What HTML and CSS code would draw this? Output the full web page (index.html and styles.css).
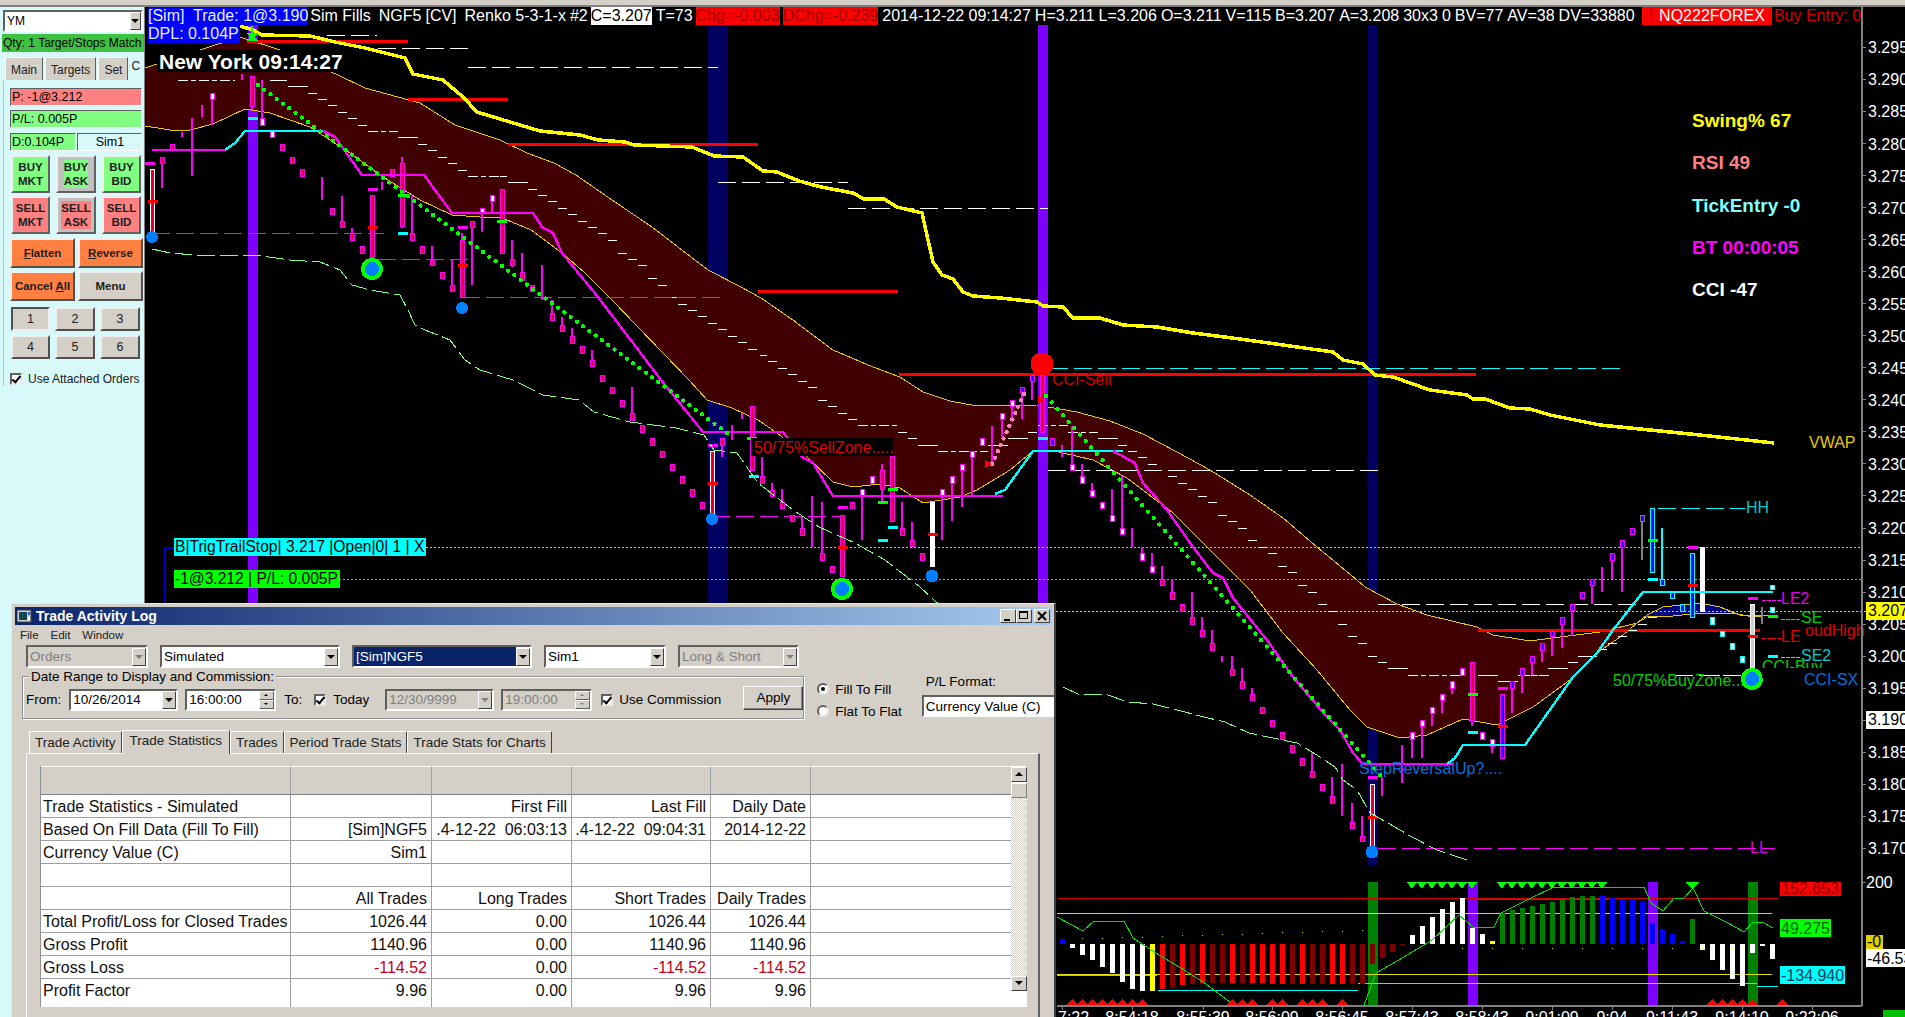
FILE: index.html
```html
<!DOCTYPE html>
<html lang="en">
<head>
  <meta charset="UTF-8">
  <title>Renko Chart with Trade Activity Log</title>
  <link rel="stylesheet" href="styles.css">
</head>
<body>
<div class="top-strip"></div>
<div class="workspace">

  <!-- Order entry panel -->
  <aside class="order-panel">
    <div class="combo symbol"><span class="combo-text">YM</span><i class="drop-btn"></i></div>
    <div class="qty-bar">Qty: 1 Target/Stops Match</div>
    <div class="panel-tabs">
      <span class="panel-tab">Main</span>
      <span class="panel-tab">Targets</span>
      <span class="panel-tab">Set</span>
      <span class="panel-tab last">C</span>
    </div>
    <div class="panel-body">
      <div class="field red-field">P: -1@3.212</div>
      <div class="field green-field">P/L: 0.005P</div>
      <div class="field-pair">
        <div class="field green-field">D:0.104P</div>
        <div class="field sim-field">Sim1</div>
      </div>
      <div class="trade-grid">
        <button class="btn-trade buy">BUY<br>MKT</button>
        <button class="btn-trade grey"><span class="buy-mark">BUY<br>ASK</span></button>
        <button class="btn-trade buy">BUY<br>BID</button>
        <button class="btn-trade sell">SELL<br>MKT</button>
        <button class="btn-trade grey"><span class="sell-mark">SELL<br>ASK</span></button>
        <button class="btn-trade sell">SELL<br>BID</button>
      </div>
      <div class="action-grid">
        <button class="btn-action orange"><u>F</u>latten</button>
        <button class="btn-action orange"><u>R</u>everse</button>
        <button class="btn-action orange">Cancel <u>A</u>ll</button>
        <button class="btn-action">Menu</button>
      </div>
      <div class="qty-grid">
        <button class="btn-qty pressed">1</button>
        <button class="btn-qty">2</button>
        <button class="btn-qty">3</button>
        <button class="btn-qty">4</button>
        <button class="btn-qty">5</button>
        <button class="btn-qty">6</button>
      </div>
      <label class="attached"><i class="check"></i>Use Attached Orders</label>
    </div>
  </aside>

  <!-- Chart -->
  <main class="chart">
    <div class="chart-header">
      <span class="hd blue-box">[Sim]&nbsp; Trade: 1@3.190</span>
      <span class="hd">Sim Fills</span>
      <span class="hd w-gap">NGF5</span>
      <span class="hd">[CV]</span>
      <span class="hd w-gap">Renko 5-3-1-x</span>
      <span class="hd">#2</span>
      <span class="hd white-box">C=3.207</span>
      <span class="hd">T=73</span>
      <span class="hd red-box">Chg=-0.003</span>
      <span class="hd red-box">DChg=-0.239</span>
      <span class="hd">2014-12-22 09:14:27</span>
      <span class="hd">H=3.211</span>
      <span class="hd">L=3.206</span>
      <span class="hd">O=3.211</span>
      <span class="hd">V=115</span>
      <span class="hd">B=3.207</span>
      <span class="hd">A=3.208</span>
      <span class="hd">30x3</span>
      <span class="hd">0</span>
      <span class="hd">BV=77</span>
      <span class="hd">AV=38</span>
      <span class="hd">DV=33880</span>
      <span class="hd account-box"><span class="bang">!</span>NQ222FOREX</span>
      <span class="hd buy-entry">Buy Entry: 0.</span>
    </div>
    <svg id="chart" class="chart-canvas" viewBox="145 6 1760 1011"></svg>
    <div class="dpl-box">DPL: 0.104P</div>
    <div class="clock-box">New York 09:14:27</div>
  </main>
</div>

<!-- Floating log window -->
<section class="log-window">
  <div class="title-bar">
    <svg class="title-icon" width="15" height="14" viewBox="0 0 15 14">
      <rect x="0" y="1" width="14" height="12" fill="#d4d0c8" stroke="#404040"/>
      <rect x="2" y="3" width="8" height="8" fill="#104858"/>
      <rect x="11" y="3" width="2" height="3" fill="#2060d0"/>
      <rect x="11" y="8" width="2" height="3" fill="#fff"/>
    </svg>
    <span class="title-text">Trade Activity Log</span>
    <div class="win-btns">
      <button class="win-btn"><i class="ico-min"></i></button>
      <button class="win-btn"><i class="ico-max"></i></button>
      <button class="win-btn close-btn">
        <svg width="10" height="10" viewBox="0 0 10 10"><path d="M1 1 L9 9 M9 1 L1 9" stroke="#000" stroke-width="2"/></svg>
      </button>
    </div>
  </div>
  <nav class="menu-bar"><span>File</span><span>Edit</span><span>Window</span></nav>

  <div class="combo-row">
    <div class="combo w-orders disabled"><span class="combo-text">Orders</span><i class="drop-btn"></i></div>
    <div class="combo w-wide"><span class="combo-text">Simulated</span><i class="drop-btn"></i></div>
    <div class="combo w-wide selected"><span class="combo-text">[Sim]NGF5</span><i class="drop-btn"></i></div>
    <div class="combo w-orders"><span class="combo-text">Sim1</span><i class="drop-btn"></i></div>
    <div class="combo w-side disabled"><span class="combo-text">Long &amp; Short</span><i class="drop-btn"></i></div>
  </div>

  <div class="filter-row">
    <div class="group">
      <span class="group-title">Date Range to Display and Commission:</span>
      <span class="g-label">From:</span>
      <div class="combo w-date"><span class="combo-text">10/26/2014</span><i class="drop-btn"></i></div>
      <div class="combo w-time"><span class="combo-text">16:00:00</span><span class="spin"><i></i><i class="down"></i></span></div>
      <span class="g-label to">To:</span>
      <i class="check"></i>
      <span class="g-label today">Today</span>
      <div class="combo w-date disabled"><span class="combo-text">12/30/9999</span><i class="drop-btn"></i></div>
      <div class="combo w-time disabled"><span class="combo-text">19:00:00</span><span class="spin"><i></i><i class="down"></i></span></div>
      <i class="check commission"></i>
      <span class="g-label">Use Commission</span>
      <button class="btn-apply">Apply</button>
    </div>
    <div class="radios">
      <label class="radio-line"><i class="radio on"></i>Fill To Fill</label>
      <label class="radio-line"><i class="radio"></i>Flat To Flat</label>
    </div>
    <div class="pl-format">
      <span class="pl-label">P/L Format:</span>
      <div class="combo w-pl"><span class="combo-text">Currency Value (C)</span></div>
    </div>
  </div>

  <div class="log-tabs">
    <span class="log-tab">Trade Activity</span>
    <span class="log-tab active">Trade Statistics</span>
    <span class="log-tab">Trades</span>
    <span class="log-tab">Period Trade Stats</span>
    <span class="log-tab">Trade Stats for Charts</span>
  </div>

  <div class="tab-pane">
    <div class="grid-wrap">
      <table class="stats">
        <colgroup><col class="c1"><col class="c2"><col class="c3"><col class="c4"><col class="c5"><col></colgroup>
        <tr class="head-row"><td></td><td></td><td></td><td></td><td></td><td></td></tr>
        <tr><td>Trade Statistics - Simulated</td><td></td><td>First Fill</td><td>Last Fill</td><td>Daily Date</td><td></td></tr>
        <tr><td>Based On Fill Data (Fill To Fill)</td><td>[Sim]NGF5</td><td>.4-12-22&nbsp; 06:03:13</td><td>.4-12-22&nbsp; 09:04:31</td><td>2014-12-22</td><td></td></tr>
        <tr><td>Currency Value (C)</td><td>Sim1</td><td></td><td></td><td></td><td></td></tr>
        <tr><td></td><td></td><td></td><td></td><td></td><td></td></tr>
        <tr><td></td><td>All Trades</td><td>Long Trades</td><td>Short Trades</td><td>Daily Trades</td><td></td></tr>
        <tr><td>Total Profit/Loss for Closed Trades</td><td>1026.44</td><td>0.00</td><td>1026.44</td><td>1026.44</td><td></td></tr>
        <tr><td>Gross Profit</td><td>1140.96</td><td>0.00</td><td>1140.96</td><td>1140.96</td><td></td></tr>
        <tr><td>Gross Loss</td><td class="neg">-114.52</td><td>0.00</td><td class="neg">-114.52</td><td class="neg">-114.52</td><td></td></tr>
        <tr><td>Profit Factor</td><td>9.96</td><td>0.00</td><td>9.96</td><td>9.96</td><td></td></tr>
      </table>
      <div class="grid-scroll">
        <button class="scroll-btn"><i class="tri-up"></i></button>
        <span class="scroll-thumb"></span>
        <span class="scroll-track"></span>
        <button class="scroll-btn"><i class="tri-down"></i></button>
      </div>
    </div>
  </div>
</section>

<script src="chart.js"></script>
</body>
</html>
```

FILE: styles.css
```css
html, body {
  margin: 0;
  height: 100%;
  overflow: hidden;
}
body {
  width: 1905px;
  height: 1017px;
  position: relative;
  background: #000;
  font-family: 'Liberation Sans', Arial, sans-serif;
  font-size: 13px;
  color: #000;
}
button {
  font-family: inherit;
  padding: 0;
  cursor: default;
}
i {
  display: block;
  font-style: normal;
}

.top-strip {
  height: 5px;
  background: #d4d0c8;
  border-bottom: 2px solid #808080;
}
.workspace {
  display: flex;
  height: 1010px;
}

/* ---- order panel ---- */
.order-panel {
  width: 144px;
  flex: none;
  background: #d8f9f9;
  border-right: 1px solid #808080;
  display: flex;
  flex-direction: column;
}
.combo {
  height: 22px;
  box-sizing: border-box;
  background: #fff;
  border: 2px solid;
  border-color: #606060 #fff #fff #606060;
  display: flex;
  align-items: center;
  font-size: 13.5px;
}
.combo-text {
  flex: 1;
  padding-left: 2px;
  white-space: nowrap;
  overflow: hidden;
}
.drop-btn {
  width: 14px;
  height: 18px;
  flex: none;
  box-sizing: border-box;
  background: #d4d0c8;
  border: 1px solid;
  border-color: #fff #404040 #404040 #fff;
  position: relative;
}
.drop-btn::after {
  content: '';
  position: absolute;
  left: 2px;
  top: 6px;
  border-left: 4px solid transparent;
  border-right: 4px solid transparent;
  border-top: 4px solid #000;
}
.symbol {
  margin: 3px 1px 0 3px;
  font-size: 12px;
}
.symbol .drop-btn {
  width: 11px;
}
.symbol .drop-btn::after {
  left: 0;
}
.qty-bar {
  margin: 2px 0 0 2px;
  height: 18px;
  line-height: 19px;
  padding-left: 1px;
  background: #40c040;
  font-size: 12px;
  white-space: nowrap;
  overflow: hidden;
}
.panel-tabs {
  display: flex;
  margin: 5px 0 0 5px;
  height: 23px;
}
.panel-tab {
  box-sizing: border-box;
  padding: 5px 5px 0;
  margin-right: 2px;
  background: #d4d0c8;
  border-top: 1px solid #fff;
  border-left: 1px solid #fff;
  border-right: 1px solid #606060;
  font-size: 12px;
  color: #202020;
}
.panel-tab.last {
  background: none;
  border: none;
  padding: 2px 0 0 1px;
}
.panel-body {
  padding: 8px 2px 0 6px;
  display: flex;
  flex-direction: column;
  border-left: 1px solid #c0c0c0;
  margin-left: 3px;
}
.field {
  height: 18px;
  box-sizing: border-box;
  border: 1px solid;
  border-color: #606060 #fff #fff #606060;
  font-size: 12.5px;
  line-height: 17px;
  padding-left: 1px;
  margin-bottom: 4px;
  white-space: nowrap;
}
.red-field { background: #ff8080; }
.green-field { background: #80ff80; }
.sim-field {
  flex: 1;
  background: #d8f9f9;
  text-align: center;
  font-size: 12.5px;
}
.field-pair {
  display: flex;
  gap: 1px;
  margin-top: 1px;
}
.field-pair .green-field {
  width: 66px;
}
.trade-grid {
  display: grid;
  grid-template-columns: 39px 40px 39px;
  grid-auto-rows: 38px;
  gap: 3px 6px;
  margin: 0 0 0 1px;
}
.btn-trade {
  border: 2px solid;
  border-color: #f0f0f0 #606060 #606060 #f0f0f0;
  font-size: 11.5px;
  font-weight: bold;
  line-height: 14px;
  color: #202020;
}
.buy { background: #80ff80; }
.sell { background: #ff8080; }
.grey { background: #c0c0c0; }
.buy-mark, .sell-mark {
  display: inline-block;
}
.buy-mark { background: #80ff80; }
.sell-mark { background: #ff8080; }
.action-grid {
  display: grid;
  grid-template-columns: 65px 65px;
  grid-auto-rows: 30px;
  gap: 3px 3px;
  margin: 4px 0 0 0;
}
.btn-action {
  background: #d4d0c8;
  border: 2px solid;
  border-color: #f0f0f0 #505050 #505050 #f0f0f0;
  font-size: 11.5px;
  font-weight: bold;
  color: #202020;
}
.orange { background: #ff8040; }
.qty-grid {
  display: grid;
  grid-template-columns: 39px 40px 40px;
  grid-auto-rows: 24px;
  gap: 4px 5px;
  margin: 6px 0 0 1px;
}
.btn-qty {
  background: #d4d0c8;
  border: 2px solid;
  border-color: #f0f0f0 #505050 #505050 #f0f0f0;
  font-size: 12.5px;
  color: #202020;
}
.btn-qty.pressed {
  border-color: #505050 #f0f0f0 #f0f0f0 #505050;
}
.check {
  width: 12px;
  height: 12px;
  flex: none;
  box-sizing: border-box;
  background: #fff;
  border: 2px solid;
  border-color: #606060 #e8e8e8 #e8e8e8 #606060;
  position: relative;
}
.check::after {
  content: '';
  position: absolute;
  left: 2px;
  top: -1px;
  width: 3px;
  height: 7px;
  border: solid #000;
  border-width: 0 2px 2px 0;
  transform: rotate(40deg);
}
.attached {
  display: flex;
  align-items: center;
  gap: 6px;
  margin-top: 13px;
  font-size: 12px;
  white-space: nowrap;
  color: #202020;
}

/* ---- chart ---- */
.chart {
  flex: 1;
  position: relative;
  background: #000;
  overflow: hidden;
}
.chart-canvas {
  position: absolute;
  left: 0;
  top: -1px;
  width: 1760px;
  height: 1011px;
  shape-rendering: crispEdges;
}
.chart-canvas text {
  font-family: 'Liberation Sans', Arial, sans-serif;
  font-size: 16px;
}
.chart-canvas .stat {
  font-size: 19px;
  font-weight: bold;
}
.chart-canvas .flag {
  font-size: 15.6px;
  white-space: pre;
}
.chart-header {
  position: relative;
  z-index: 2;
  display: flex;
  gap: 4px;
  width: 1717px;
  height: 18px;
  padding-left: 3px;
  box-sizing: border-box;
  overflow: hidden;
  font-size: 16px;
  line-height: 18px;
  color: #fff;
  white-space: nowrap;
}
.hd {
  flex: none;
}
.w-gap {
  margin-left: 4px;
}
.blue-box {
  background: #0000ff;
  color: #e0f0ff;
  margin-right: -2px;
}
.white-box {
  background: #fff;
  color: #000;
  margin-left: -1px;
}
.red-box {
  background: #ff0000;
  color: #a00000;
  margin-left: -1px;
}
.account-box {
  background: #ff0000;
  margin-left: 3px;
  padding: 0 7px;
}
.bang {
  color: #a00000;
  margin-right: 6px;
}
.buy-entry {
  color: #d00000;
  margin-left: -2px;
}
.dpl-box {
  position: absolute;
  left: 3px;
  top: 18px;
  width: 92px;
  height: 18px;
  line-height: 18px;
  background: #0000ff;
  color: #e0f0ff;
  font-size: 16px;
  white-space: nowrap;
  overflow: hidden;
}
.clock-box {
  position: absolute;
  left: 12px;
  top: 43px;
  height: 22px;
  padding: 0 3px 0 2px;
  background: #000;
  color: #fff;
  font-size: 21px;
  font-weight: bold;
  line-height: 23px;
  white-space: nowrap;
}

/* ---- log window ---- */
.log-window {
  position: absolute;
  left: 11px;
  top: 603px;
  width: 1045px;
  height: 414px;
  box-sizing: border-box;
  background: #d4d0c8;
  border-top: 1px solid #e8e8e8;
  border-left: 1px solid #e8e8e8;
  border-right: 2px solid #404040;
  padding: 3px 2px 0 3px;
  overflow: hidden;
}
.title-bar {
  height: 18px;
  display: flex;
  align-items: center;
  gap: 4px;
  padding-left: 2px;
  background: linear-gradient(to right, #0a246a, #a6caf0);
  color: #fff;
  font-size: 14px;
  font-weight: bold;
}
.title-icon {
  flex: none;
}
.title-text {
  flex: 1;
}
.win-btns {
  display: flex;
  margin-right: 2px;
}
.win-btn {
  width: 16px;
  height: 14px;
  background: #d4d0c8;
  border: 1px solid;
  border-color: #fff #404040 #404040 #fff;
  position: relative;
  display: block;
}
.close-btn {
  margin-left: 2px;
}
.close-btn svg {
  position: absolute;
  left: 2px;
  top: 1px;
}
.ico-min {
  position: absolute;
  left: 3px;
  bottom: 1px;
  width: 6px;
  height: 2px;
  background: #000;
}
.ico-max {
  position: absolute;
  left: 2px;
  top: 1px;
  width: 9px;
  height: 8px;
  border: 1px solid #000;
  border-top-width: 2px;
  box-sizing: border-box;
}
.menu-bar {
  display: flex;
  gap: 12px;
  height: 20px;
  align-items: center;
  padding-left: 5px;
  font-size: 11.5px;
  color: #202020;
}
.combo-row {
  display: flex;
  gap: 12px;
  margin: 0 0 0 11px;
}
.combo-row .combo {
  height: 23px;
}
.w-orders { width: 122px; }
.w-wide { width: 180px; }
.w-side { width: 121px; }
.disabled {
  background: #d4d0c8;
  color: #808080;
}
.disabled .drop-btn::after {
  border-top-color: #808080;
}
.selected .combo-text {
  background: #0a246a;
  color: #fff;
  align-self: stretch;
  line-height: 19px;
}
.filter-row {
  display: flex;
  height: 45px;
  margin-top: 8px;
  margin-left: 7px;
}
.group {
  position: relative;
  width: 787px;
  height: 43px;
  box-sizing: border-box;
  border: 1px solid #909090;
  box-shadow: inset 1px 1px 0 #fff, 1px 1px 0 #fff;
  display: flex;
  align-items: center;
  padding: 4px 0 0 3px;
  font-size: 13.5px;
}
.group-title {
  position: absolute;
  left: 6px;
  top: -8px;
  padding: 0 2px;
  background: #d4d0c8;
  font-size: 13.5px;
  white-space: nowrap;
}
.g-label {
  white-space: nowrap;
  margin-right: 8px;
}
.g-label.to {
  margin: 0 12px 0 8px;
}
.g-label.today {
  margin: 0 16px 0 7px;
}
.w-date {
  width: 109px;
  margin-right: 7px;
}
.w-time {
  width: 91px;
}
.spin {
  width: 15px;
  flex: none;
  display: flex;
  flex-direction: column;
}
.spin i {
  height: 9px;
  background: #d4d0c8;
  border: 1px solid;
  border-color: #fff #606060 #606060 #fff;
  box-sizing: border-box;
  position: relative;
}
.spin i::after {
  content: '';
  position: absolute;
  left: 4px;
  top: 2px;
  border-left: 2px solid transparent;
  border-right: 2px solid transparent;
  border-bottom: 2px solid #000;
}
.spin i.down::after {
  border-bottom: none;
  border-top: 2px solid #000;
}
.disabled .spin i::after {
  border-top-color: #808080;
  border-bottom-color: #808080;
}
.check.commission {
  margin: 0 6px 0 9px;
}
.btn-apply {
  width: 60px;
  height: 24px;
  margin: -4px 0 0 14px;
  background: #d4d0c8;
  border: 1px solid;
  border-color: #fff #404040 #404040 #fff;
  box-shadow: inset -1px -1px 0 #808080;
  font-size: 13.5px;
}
.radios {
  margin-left: 13px;
  padding-top: 2px;
  font-size: 13.5px;
}
.radio-line {
  display: flex;
  align-items: center;
  gap: 6px;
  height: 22px;
  white-space: nowrap;
}
.radio {
  width: 12px;
  height: 12px;
  box-sizing: border-box;
  border-radius: 50%;
  background: #fff;
  border: 2px solid;
  border-color: #606060 #e8e8e8 #e8e8e8 #606060;
  position: relative;
}
.radio.on::after {
  content: '';
  position: absolute;
  left: 2px;
  top: 2px;
  width: 4px;
  height: 4px;
  border-radius: 50%;
  background: #000;
}
.pl-format {
  margin-left: 20px;
  font-size: 13.5px;
}
.pl-label {
  display: block;
  height: 19px;
  padding-left: 4px;
  line-height: 12px;
  white-space: nowrap;
}
.w-pl {
  width: 132px;
  height: 22px;
  border-right: none;
}
.log-tabs {
  display: flex;
  align-items: flex-end;
  height: 32px;
  margin: 0 0 0 14px;
}
.log-tab {
  box-sizing: border-box;
  height: 22px;
  padding: 3px 5px 0;
  border-top: 1px solid #fff;
  border-left: 1px solid #fff;
  border-right: 1px solid #404040;
  font-size: 13.5px;
  white-space: nowrap;
  color: #202020;
}
.log-tab.active {
  position: relative;
  top: 1px;
  height: 24px;
  padding: 2px 7px 0;
  background: #d4d0c8;
  z-index: 1;
}
.tab-pane {
  margin: 0 0 0 11px;
  width: 1014px;
  height: 300px;
  box-sizing: border-box;
  border-top: 1px solid #fff;
  border-left: 1px solid #fff;
  border-right: 2px solid #606060;
  padding: 12px 0 0 13px;
}
.grid-wrap {
  display: flex;
  align-items: flex-start;
  width: 986px;
  height: 241px;
  background: #fff;
  border-left: 1px solid #909090;
}
.stats {
  table-layout: fixed;
  border-collapse: separate;
  border-spacing: 0;
  width: 970px;
  flex: none;
  font-size: 16px;
  line-height: 20px;
  color: #101010;
}
.c1 { width: 250px; }
.c2 { width: 141px; }
.c3 { width: 140px; }
.c4 { width: 139px; }
.c5 { width: 100px; }
.stats td {
  height: 20px;
  box-sizing: content-box;
  padding: 2px 4px 0 0;
  border-right: 1px solid #a0a0a0;
  border-bottom: 1px solid #a0a0a0;
  text-align: right;
  vertical-align: top;
  white-space: nowrap;
  overflow: hidden;
}
.stats td:first-child {
  padding-left: 2px;
  text-align: left;
}
.stats td:last-child {
  border-right: none;
}
.stats .head-row td {
  height: 27px;
  padding-top: 0;
  background: #d4d0c8;
  border-top: 1px solid #fff;
  border-bottom: 1px solid #808080;
}
.stats tr:last-child td {
  height: 26px;
  border-bottom: none;
}
.stats .neg {
  color: #c00020;
}
.grid-scroll {
  width: 16px;
  display: flex;
  flex-direction: column;
  padding-top: 1px;
}
.scroll-btn {
  height: 15px;
  flex: none;
  background: #d4d0c8;
  border: 1px solid;
  border-color: #fff #404040 #404040 #fff;
  position: relative;
  display: block;
}
.scroll-thumb {
  height: 15px;
  margin-top: 1px;
  flex: none;
  background: #d4d0c8;
  border: 1px solid;
  border-color: #fff #808080 #808080 #fff;
  box-sizing: border-box;
}
.scroll-track {
  height: 178px;
  flex: none;
  background: repeating-conic-gradient(#d4d0c8 0 25%, #fff 0 50%) 0 0 / 2px 2px;
}
.tri-up, .tri-down {
  position: absolute;
  left: 3px;
  top: 4px;
  border-left: 4px solid transparent;
  border-right: 4px solid transparent;
}
.tri-up { border-bottom: 4px solid #000; }
.tri-down { border-top: 4px solid #000; }
```

FILE: chart.js
```js
// draws the whole chart into one svg, coordinates are page pixels (see viewBox)
const svg = document.getElementById('chart');
const NS = 'http://www.w3.org/2000/svg';

function add(tag, attrs, txt) {
  const el = document.createElementNS(NS, tag);
  for (const k in attrs) el.setAttribute(k, attrs[k]);
  if (txt !== undefined) el.textContent = txt;
  svg.appendChild(el);
  return el;
}
function rect(x, y, w, h, fill) {
  return add('rect', { x, y, width: w, height: h, fill });
}
function hline(x1, x2, y, color, w = 1, dash) {
  const a = { x1, x2, y1: y, y2: y, stroke: color, 'stroke-width': w };
  if (dash) a['stroke-dasharray'] = dash;
  return add('line', a);
}
function vline(x, y1, y2, color, w = 2) {
  return add('line', { x1: x, x2: x, y1, y2, stroke: color, 'stroke-width': w });
}
function poly(pts, color, w = 1, dash) {
  const a = { points: pts.join(' '), fill: 'none', stroke: color, 'stroke-width': w, 'stroke-linejoin': 'round' };
  if (dash) a['stroke-dasharray'] = dash;
  return add('polyline', a);
}
function area(pts, fill) {
  return add('polygon', { points: pts.join(' '), fill });
}
function dot(x, y, r, fill) {
  return add('circle', { cx: x, cy: y, r, fill });
}
function label(x, y, color, str, cls, anchor) {
  const a = { x, y, fill: color };
  if (cls) a.class = cls;
  if (anchor) a['text-anchor'] = anchor;
  return add('text', a, str);
}

const PURPLE = '#8000ff', NAVY = '#000060', MAGENTA = '#ff00ff', CYAN = '#00ffff';
const GREEN = '#00ff00', RED = '#ff0000', YELLOW = '#ffff00', THIN = '#e8c800';

// ---------- session bars ----------
rect(248, 25, 10, 580, PURPLE);
rect(708, 25, 20, 580, NAVY);
rect(1368, 25, 10, 840, NAVY);

// ---------- cloud ----------
const cloudTop = [[145,68],[200,50],[240,37],[280,50],[338,75],[365,88],[420,103],[455,125],[500,140],[527,153],[554,163],[576,175],[612,200],[652,227],[678,247],[708,270],[741,287],[761,298],[793,320],[833,350],[873,367],[900,377],[923,392],[950,401],[977,406],[1037,405],[1077,412],[1110,421],[1143,434],[1177,452],[1210,470],[1250,495],[1283,518],[1317,547],[1357,580],[1365,587],[1397,604],[1427,615],[1477,627],[1493,635],[1530,641],[1560,637],[1600,632],[1637,623]];
const cloudBot = [[145,126],[170,130],[190,130],[213,124],[245,109],[270,113],[310,127],[350,153],[380,175],[420,200],[452,215],[480,217],[500,217],[531,230],[562,253],[585,273],[612,300],[689,380],[707,400],[732,408],[758,420],[777,433],[807,457],[833,482],[853,487],[880,484],[900,488],[923,503],[960,497],[977,490],[1010,470],[1033,451],[1050,450],[1093,460],[1127,478],[1173,513],[1217,557],[1250,590],[1283,633],[1317,670],[1350,710],[1367,727],[1400,738],[1427,735],[1463,719],[1497,725],[1533,707],[1570,680],[1597,653],[1623,635],[1637,623]];
area(cloudTop.concat(cloudBot.slice().reverse()), '#400000');
const bullTop = [[1637,623],[1647,615],[1663,607],[1700,603],[1720,607],[1740,615],[1773,615]];
const bullBot = [[1637,623],[1647,617],[1673,616],[1700,613],[1733,613],[1753,617],[1773,615]];
area(bullTop.concat(bullBot.slice().reverse()), '#000080');
poly(cloudTop.concat(bullTop), THIN);
poly(cloudBot.concat(bullBot), THIN);

rect(1038, 25, 10, 580, PURPLE);

// ---------- levels ----------
hline(426, 1862, 547, '#60e0e0', 1, '2 2');
hline(339, 1862, 579, '#40e040', 1, '2 2');
hline(1056, 1866, 611, '#e0e000', 1, '2 2');
hline(1050, 1626, 368, CYAN, 1, '18 6');

[[247,408,41],[408,508,99],[508,758,144],[758,898,291],[899,1476,374],[1478,1760,630]].forEach(r => hline(r[0], r[1], r[2], RED, 3));

[[327,377,35],[378,468,48],[468,718,67],[718,848,182],[848,1048,208],[1048,1378,470],[1378,1657,604],[1675,1770,675]].forEach(r => hline(r[0], r[1], r[2], '#fff', 1, '18 6'));

// short white steps, read off in batches: origin x, origin y, x scale
function steps(ox, oy, sx, list) {
  list.forEach(s => {
    const x1 = ox + s[0] / sx, x2 = ox + s[1] / sx, y = oy + s[2] / 3;
    hline(x1, x2, y, '#fff', 1, x2 - x1 > 25 ? '10 3 5 3' : null);
  });
}
steps(0, 0, 3, [[535,705,241],[810,860,241],[865,925,259],[925,950,280],[955,980,298],[985,1010,316],[1015,1040,337],[1045,1070,355],[1075,1100,376],[1105,1195,394],[1195,1255,412],[1255,1280,433],[1285,1310,451],[1315,1340,471],[1345,1370,490],[1375,1400,510],[1405,1500,528]]);
steps(500, 0, 2.24, [[0,15,528],[18,62,547],[63,83,567],[85,105,585],[108,128,604],[130,150,625],[152,172,643],[175,195,663],[197,217,682],[220,240,701],[242,262,720],[265,285,760],[287,307,778],[310,330,796],[332,352,834],[354,374,856],[377,397,892]]);
steps(0, 0, 1, [[678,687,912],[688,697,930],[698,707,948],[708,717,969],[718,727,987],[728,737,1008],[738,747,1026],[748,757,1047]]);
steps(760, 230, 3, [[0,20,376],[25,50,394],[55,80,414],[85,110,433],[115,140,453],[145,170,472],[175,200,511],[205,230,529],[235,260,549],[265,290,568],[295,410,586],[415,440,606],[445,470,625],[475,535,646],[535,685,664],[685,745,646],[745,805,625],[805,830,606],[835,925,586],[925,1015,606],[1015,1075,625],[1075,1100,646],[1105,1130,664],[1135,1160,683],[1165,1190,702],[1225,1250,739],[1255,1280,760],[1285,1310,777],[1315,1340,799],[1345,1370,816],[1375,1400,856],[1405,1430,874]]);
steps(1050, 340, 3, [[235,260,333],[265,290,352],[295,320,372],[355,380,409],[385,410,430],[415,440,448],[445,470,468],[475,500,487],[505,530,525],[535,560,544],[565,590,565],[595,620,601],[625,650,622],[655,680,640],[685,710,679],[715,740,697],[745,770,736],[775,800,757],[805,830,793],[835,860,814],[865,890,853],[895,920,889],[925,950,910],[955,980,949],[985,1010,967],[1015,1075,985],[1075,1245,1006],[1285,1345,1006],[1345,1405,1025],[1405,1500,1006]]);
steps(1500, 480, 3, [[0,55,605],[60,145,586],[145,205,565],[205,235,547],[235,290,529],[295,320,509],[325,350,490],[355,380,470],[385,410,452],[415,440,433],[445,470,412],[640,660,586],[700,720,586],[780,815,586]]);

// dashed magenta / grey structure lines
[[152,384,233],[378,470,259],[462,720,297],[712,845,516],[1378,1775,848]].forEach(r => hline(r[0], r[1], r[2], MAGENTA, 1, '18 6'));
hline(1658, 1745, 508, CYAN, 1, '18 6');

// ---------- candles ----------
// [x, wick top, wick bottom, body top, body bottom, body fill, frame colour]
const FILL = { w: '#fff', r: '#e00030', b: '#2000ff', g: '#d0d0d0' };
function candles(oy, list) {
  list.forEach(c => {
    const col = c[6] || MAGENTA;
    const y = v => oy + v / 3;
    vline(c[0], y(c[1]), y(c[2]), col);
    if (c[5]) {
      const r = rect(c[0] - 2, y(c[3]), 4, y(c[4]) - y(c[3]), FILL[c[5]]);
      r.setAttribute('stroke', col);
    }
  });
}
candles(0, [[152,508,700,508,700,'r','#fff'],[162,470,565,473,490,'r'],[172,433,447,433,447,'r'],[182,395,412],[192,355,527],[202,315,352],[212,280,375,280,297,'w'],[242,222,240],[252,230,330,230,318,'r'],[262,240,375,355,375,'w'],[272,395,412,395,412,'w'],[282,433,450,433,450,'r'],[292,472,490,472,490,'r'],[302,508,528,508,528,'r'],[322,530,600],[332,625,643,625,643,'r'],[342,587,683,665,683,'r'],[352,683,722,700,722,'r'],[362,740,760,740,760,'r'],[372,587,772,587,772,'r'],[382,545,570],[392,508,528,508,528,'r'],[402,472,683,490,680,'r'],[412,587,722,700,722,'r'],[422,740,760,740,760,'r'],[432,738,797,780,797,'r'],[442,817,835,817,835,'r'],[452,778,875,856,875,'r'],[462,700,892,720,892,'r'],[472,665,855,665,682,'r'],[482,625,697,625,640,'w'],[492,587,640,587,605,'w']]);
candles(0, [[502,568,760,568,760,'r'],[512,720,800,778,797,'r'],[522,760,840,816,840,'r'],[532,855,875,855,875,'r'],[542,795,900],[552,900,960,940,960,'r'],[562,950,995,975,995,'r'],[572,985,1030,1010,1030,'r'],[582,1040,1060,1040,1060,'r'],[592,1050,1100,1080,1100,'r']]);
candles(380, [[602,-15,5,-15,5,'r'],[612,22,40,22,40,'r'],[622,60,80,60,80,'r'],[632,20,120,100,120,'r'],[642,137,158,137,158,'r'],[652,175,197,175,197,'r'],[662,214,233,214,233,'r'],[672,253,272,253,272,'r'],[682,290,310,290,310,'r'],[692,329,350,329,350,'r'],[702,368,386,368,386,'r'],[712,214,406,214,406,'r','#fff'],[722,175,230,175,197,'r'],[732,135,180],[742,100,118],[752,80,270,80,270,'r'],[762,230,310,290,310,'r']]);
candles(230, [[772,760,800,780,800,'r'],[782,778,835,818,835,'r'],[792,857,875,857,875,'r'],[802,857,915,895,915,'r'],[812,798,950],[822,817,990,970,990,'r'],[832,1010,1028,1010,1028,'r'],[842,857,1040,857,1040,'r'],[852,817,835,817,835,'r'],[862,778,930,778,795,'w'],[872,740,760,740,760,'w'],[882,702,815,720,778,'r'],[892,680,875,680,875,'r'],[902,815,915,895,915,'r'],[912,875,950,932,950,'r'],[922,970,990,970,990,'r'],[932,817,1010,817,1010,'w','#fff'],[942,778,930,778,795,'w'],[952,740,872,740,760,'w'],[962,702,832,702,720,'w'],[972,665,795,665,682,'w'],[982,625,645,625,645,'w'],[992,587,700],[1002,550,622,550,568,'w'],[1012,512,568,512,530,'w'],[1022,472,567,472,490,'b'],[1032,435,510,435,455,'b'],[1042,435,608,435,608,'r'],[1052,625,647,625,647,'b'],[1062,645,680],[1072,587,720,702,720,'w'],[1082,702,760,740,760,'w']]);
candles(340, [[1092,430,470,450,470,'w'],[1102,488,505,488,505,'w'],[1112,447,545,527,545,'w'],[1122,408,585,565,583,'w'],[1132,565,622],[1142,622,662,640,662,'w'],[1152,640,698,680,698,'w'],[1162,678,737,718,737,'r'],[1172,718,777,757,777,'r'],[1182,793,815,793,815,'r'],[1192,757,853,833,853,'r'],[1202,832,890,872,890,'r'],[1212,870,930,910,930,'r'],[1222,948,965],[1232,948,1007,987,1007,'r'],[1242,985,1045,1025,1045,'r'],[1252,1045,1082,1063,1082,'r'],[1262,1102,1120,1102,1120,'r'],[1272,1142,1160,1142,1160,'r'],[1282,1178,1198,1178,1198,'r'],[1292,1215,1238,1215,1238,'r'],[1302,1255,1275,1255,1275,'r'],[1312,1237,1312,1295,1312,'r'],[1322,1333,1352,1333,1352,'r'],[1332,1312,1390,1370,1390,'r'],[1342,1273,1427],[1352,1390,1465,1448,1465,'r'],[1362,1428,1505,1488,1505,'r'],[1372,1333,1525,1333,1525,'r','#fff'],[1382,1312,1368],[1402,1215,1330],[1412,1178,1255,1178,1198,'w'],[1422,1140,1255,1140,1160,'w'],[1432,1102,1158,1102,1120,'w'],[1442,1062,1120,1062,1082,'w'],[1452,1025,1062,1025,1045,'w'],[1462,985,1005,985,1005,'w'],[1472,967,1158,967,1140,'r'],[1482,1178,1198,1178,1198,'w'],[1492,1198,1238,1198,1218,'w'],[1502,1062,1255,1062,1255,'b'],[1512,1025,1118,1025,1045,'b'],[1522,985,1060,985,1005,'b'],[1532,948,1005,948,968,'b'],[1542,910,965,910,930,'b']]);
candles(480, [[1552,455,527,455,470,'b'],[1562,412,505,412,432,'b'],[1572,373,467,373,392,'b'],[1582,338,355,338,355,'b'],[1592,298,372,298,317,'b'],[1602,260,335],[1612,220,298,220,240,'b'],[1622,182,335,182,202,'b'],[1632,145,163,145,163,'b'],[1642,105,240,105,125,'b','#808080'],[1652,85,278,85,278,'b',CYAN],[1662,145,298,298,317,'b',CYAN],[1672,338,355,338,355,'b',CYAN],[1682,373,393,373,393,'b',CYAN],[1692,220,412,220,412,'b',CYAN],[1702,202,393,202,393,'w','#fff'],[1712,412,433,412,433,'w',CYAN],[1722,455,470,455,470,'w',CYAN],[1732,490,508,490,508,'w',CYAN],[1742,530,548,530,548,'w',CYAN],[1752,373,570,373,570,'g','#fff'],[1762,380,432,380,380,'g','#808080'],[1772,315,327,315,327,'w',CYAN],[1772,381,396,381,396,'w',CYAN]]);

// little ticks across the candles: [x1, x2, y, colour]
[[148,158,201,RED],[145,155,163,MAGENTA],[248,258,118,CYAN],[368,378,227,RED],[368,378,189,MAGENTA],[398,408,195,GREEN],[398,408,233,CYAN],[458,468,265,RED],[458,468,227,MAGENTA],
 [497,507,221,GREEN],[708,718,483,RED],[708,718,445,MAGENTA],[747,757,438,GREEN],[749,759,476,CYAN],[838,848,547,RED],[838,848,507,MAGENTA],[878,888,502,GREEN],[888,898,489,GREEN],[888,898,527,CYAN],[878,888,540,CYAN],[928,938,534,RED],[1038,1048,438,CYAN],[1368,1378,817,RED],[1368,1378,777,MAGENTA],[1468,1478,694,GREEN],[1468,1478,732,CYAN],[1498,1508,726,RED],[1498,1508,688,MAGENTA],
 [1648,1658,540,GREEN],[1648,1658,579,CYAN],[1688,1698,585,RED],[1688,1698,547,MAGENTA],[1748,1758,598,MAGENTA],[1748,1758,636,RED],[1768,1778,616,GREEN],[1768,1778,656,CYAN]].forEach(t => hline(t[0], t[1], t[2], t[3], 3));

// ---------- moving lines ----------
poly([[240,26],[253,30],[262,35],[310,36],[335,42],[365,48],[405,58],[413,74],[443,80],[463,97],[477,112],[500,119],[540,131],[580,135],[598,140],[625,142],[634,145],[692,147],[714,156],[743,157],[763,171],[777,172],[799,181],[821,187],[853,193],[864,199],[884,199],[897,207],[922,213],[933,262],[942,275],[953,279],[963,292],[973,296],[1000,298],[1037,302],[1043,306],[1063,307],[1073,318],[1100,318],[1123,325],[1157,327],[1193,333],[1240,339],[1333,352],[1343,360],[1363,364],[1375,375],[1393,377],[1430,390],[1467,395],[1473,399],[1485,399],[1510,408],[1530,409],[1550,415],[1600,425],[1700,435],[1774,443]], YELLOW, 3.5);

// step line: magenta while short, cyan while long
poly([[152,150],[225,150]], MAGENTA, 2.4);
poly([[225,150],[235,143],[245,131],[323,131]], CYAN, 2.4);
poly([[323,131],[335,137],[362,175],[424,175],[452,213],[533,213],[542,227],[553,233],[562,253],[598,297],[661,380],[703,432],[783,432],[802,457],[813,463],[833,496],[1003,496]], MAGENTA, 2.4);
poly([[995,494],[1005,490],[1033,451],[1123,451]], CYAN, 2.4);
poly([[1113,451],[1135,463],[1143,483],[1167,510],[1193,547],[1213,573],[1223,578],[1233,598],[1267,640],[1293,677],[1327,717],[1340,730],[1353,753],[1363,764],[1453,764]], MAGENTA, 2.4);
poly([[1447,764],[1455,758],[1463,745],[1525,745],[1573,677],[1597,653],[1613,630],[1643,592],[1773,592]], CYAN, 2.4);

// lower band
poly([[152,249],[170,253],[195,255],[255,255],[290,260],[320,262],[340,270],[352,285],[370,290],[400,295],[408,310],[415,325],[425,330],[450,340],[465,360],[480,370],[513,380],[543,395],[579,400],[594,412],[630,422],[676,428],[704,435],[714,450],[737,453],[758,483],[793,510],[819,527],[855,543],[885,560],[920,587],[945,610]], '#80ff80', 1, '18 5');
poly([[1063,687],[1080,695],[1105,694],[1128,702],[1153,704],[1177,710],[1200,716],[1225,722],[1249,733],[1273,738],[1297,743],[1320,757],[1335,767],[1343,780],[1357,790],[1370,813],[1388,823],[1412,837],[1437,850],[1467,860]], '#80ff80', 1, '18 5');

// trail dots
function dots(x1, y1, x2, y2, n, color, r) {
  for (let i = 0; i <= n; i++) dot(x1 + (x2 - x1) * i / n, y1 + (y2 - y1) * i / n, r, color);
}
dots(258, 85, 727, 433, 75, GREEN, 2.2);
dots(1046, 396, 1380, 775, 59, GREEN, 2.2);
dots(992, 464, 1024, 394, 11, '#ff80c0', 2.2);

// small arrows
area([[985,460],[985,468],[992,464]], RED);
area([[1038,396],[1038,404],[1044,400]], RED);
area([[247,33],[258,33],[252,40]], GREEN);
area([[247,41],[258,41],[252,34]], GREEN);
vline(252, 26, 33, GREEN);

// signal dots
function ring(x, y) {
  dot(x, y, 11, GREEN);
  dot(x, y, 7, '#0080ff');
}
dot(152, 237, 6, '#0080ff');
dot(462, 308, 6, '#0080ff');
dot(712, 519, 6, '#0080ff');
dot(932, 576, 6.5, '#0080ff');
dot(1372, 852, 6.5, '#0080ff');
ring(372, 269);
ring(842, 589);
ring(1752, 679);
dot(1042, 364, 11.5, RED);

// ---------- on-chart labels ----------
rect(751, 438, 142, 18, '#000');
label(754, 453, '#e00000', '50/75%SellZone.....');
label(1052, 385, '#d00000', 'CCI-Sell');
label(1359, 774, '#0070e0', 'StepReversalUp?....');
label(1613, 686, '#00d000', '50/75%BuyZone....');
label(1809, 448, THIN, 'VWAP');
label(1746, 513, '#00c8c8', 'HH');
label(1762, 672, '#00d000', 'CCI-Buy');
rect(1762, 668, 60, 10, '#000');
hline(1762, 1781, 600, MAGENTA, 1, '4 1');
hline(1781, 1801, 619, GREEN, 1, '4 1');
hline(1762, 1781, 638, RED, 1, '4 1');
hline(1781, 1801, 657, CYAN, 1, '4 1');
label(1781, 604, '#e000e0', 'LE2');
label(1801, 623, '#00d000', 'SE');
label(1805, 636, '#e00000', 'oudHigh');
label(1781, 642, '#e00000', 'LE');
label(1801, 661, '#00c8c8', 'SE2');
label(1804, 685, '#0070e0', 'CCI-SX');
label(1750, 853, '#e000e0', 'LL');

// readouts
label(1692, 127, YELLOW, 'Swing% 67', 'stat');
label(1692, 169, '#ff8080', 'RSI 49', 'stat');
label(1692, 212, '#80ffff', 'TickEntry -0', 'stat');
label(1692, 254, MAGENTA, 'BT 00:00:05', 'stat');
label(1692, 296, '#fff', 'CCI -47', 'stat');

// order flags
rect(164, 547, 10, 2, '#0000c0');
vline(165, 548, 605, '#0000c0', 2);
rect(174, 538, 252, 18, CYAN);
label(175, 552, '#000', 'B|TrigTrailStop| 3.217 |Open|0| 1 | X', 'flag');
rect(174, 570, 166, 18, GREEN);
label(175, 584, '#000', '-1@3.212 | P/L: 0.005P', 'flag');

// ---------- price axis ----------
vline(1862, 6, 1006, '#808080', 2);
for (let i = 0; i < 26; i++) {
  const p = 3.295 - i * 0.005;
  const y = 47.4 + i * 32.04;
  hline(1862, 1866, y, '#808080');
  label(1868, y + 6, '#fff', p.toFixed(3));
}
rect(1866, 602, 39, 18, YELLOW);
label(1868, 616, '#000', '3.207');
rect(1866, 711, 39, 18, '#fff');
label(1868, 725, '#000', '3.190');

// ---------- indicator pane ----------
rect(1368, 882, 10, 123, '#008000');
rect(1468, 882, 10, 123, PURPLE);
rect(1648, 882, 10, 123, PURPLE);
rect(1748, 882, 10, 123, '#008000');

hline(1057, 1778, 898, '#d00000');
hline(1478, 1607, 899, RED, 1);
hline(1057, 1772, 913, '#e0e000');
hline(1057, 1772, 974, '#e0e000');
hline(1057, 1157, 975, CYAN);
hline(1158, 1358, 990, CYAN);
hline(1358, 1757, 983, CYAN);
hline(1757, 1778, 986, CYAN);

const BASE = 252;
const HIST = { b: '#0000ff', w: '#fff', y: YELLOW, r: RED, d: '#800000', g: '#008000' };
const bars = [[238,'b'],[263,'w'],[285,'w'],[300,'w'],[320,'w'],[340,'w'],[365,'w'],[387,'w'],[392,'w'],[392,'y'],[387,'r'],[380,'d'],[375,'r'],[372,'d'],[370,'r'],[370,'d'],[370,'d'],[370,'r'],[370,'d'],[370,'r'],[370,'r'],[372,'r'],[372,'r'],[372,'d'],[372,'r'],[372,'d'],[372,'d'],[372,'r'],[372,'r'],[372,'d'],[372,'d'],[312,'d'],[295,'d'],[277,'d'],[255,'d'],[225,'w'],[198,'w'],[172,'w'],[147,'w'],[127,'w'],[113,'w'],[205,'w'],[222,'w'],[243,'y'],[158,'g'],[150,'g'],[143,'g'],[138,'g'],[132,'g'],[125,'g'],[118,'g'],[110,'g'],[108,'g'],[108,'g'],[108,'b'],[113,'b'],[117,'b'],[120,'b'],[125,'b'],[188,'b'],[207,'b'],[222,'b'],[243,'b'],[178,'g'],[270,'w'],[300,'w'],[330,'w'],[357,'w'],[377,'w'],[278,'w'],[258,'w'],[297,'w']];
bars.forEach((b, i) => {
  const x = 1060 + i * 10;
  const y1 = 860 + Math.min(b[0], BASE) / 3;
  const y2 = 860 + Math.max(b[0], BASE) / 3;
  rect(x, y1, 5, y2 - y1, HIST[b[1]]);
});
// sparse zero-line dots
for (let i = 2; i < 32; i += 2) rect(1060 + i * 10 + 2, 939 - i * 0.3, 1, 1, '#e0e000');
for (let i = 40; i < 70; i += 3) rect(1060 + i * 10 + 2, 948, 1, 1, '#e0e000');

const g1 = [[1057,917],[1083,931],[1094,921],[1124,921],[1133,938],[1159,955],[1181,968],[1203,982],[1230,1002]];
const g2 = [[1364,1005],[1376,973],[1404,957],[1432,940],[1459,915],[1473,927],[1494,927],[1501,913],[1527,900],[1554,887],[1644,887],[1651,903],[1663,911],[1674,898],[1684,898],[1693,888],[1704,911],[1726,922],[1744,932],[1753,922],[1762,922],[1773,928]];
poly(g1, '#00e000');
poly(g2, '#00e000');

function tri(cx, y1, y2, halfW, color) {
  area([[cx - halfW, y1], [cx + halfW, y1], [cx, y2]], color);
}
for (let i = 0; i < 7; i++) tri(1412 + i * 10, 882, 889, 5, GREEN);
for (let i = 0; i < 11; i++) tri(1502 + i * 10, 882, 889, 5, GREEN);
tri(1692, 882, 889, 7, GREEN);
[0,1,2,3,4,5,6,7,16,17,18,20,21,23,24,25,27,64,65,66,67,68,71].forEach(i => {
  const cx = 1062 + (i + 1) * 10;
  tri(cx, 1005, 999, 6, RED);
});

// pane readouts
rect(1780, 882, 61, 14, RED);
label(1781, 894, '#900000', '152.653');
rect(1780, 919, 51, 18, GREEN);
label(1781, 934, '#006000', '49.275');
rect(1780, 966, 65, 18, CYAN);
label(1781, 981, '#004060', '-134.940');
hline(1862, 1866, 882, '#808080');
label(1866, 888, '#fff', '200');
rect(1866, 935, 17, 14, '#e0d000');
label(1867, 947, '#000', '-0');
rect(1866, 949, 39, 18, '#fff');
label(1867, 964, '#000', '-46.53');
rect(1883, 1010, 22, 7, '#00c000');

// ---------- time axis ----------
hline(1057, 1862, 1006, '#808080', 2);
vline(1062, 1006, 1010, '#808080', 1);
label(1058, 1023, '#fff', '7:22');
[[1132,'8:54:18'],[1203,'8:55:39'],[1272,'8:56:09'],[1342,'8:56:45'],[1412,'8:57:43'],[1482,'8:58:43'],[1552,'9:01:09'],[1612,'9:04'],[1672,'9:11:43'],[1742,'9:14:10'],[1812,'9:22:06']].forEach(t => {
  vline(t[0], 1006, 1010, '#808080', 1);
  label(t[0], 1023, '#fff', t[1], null, 'middle');
});
```
